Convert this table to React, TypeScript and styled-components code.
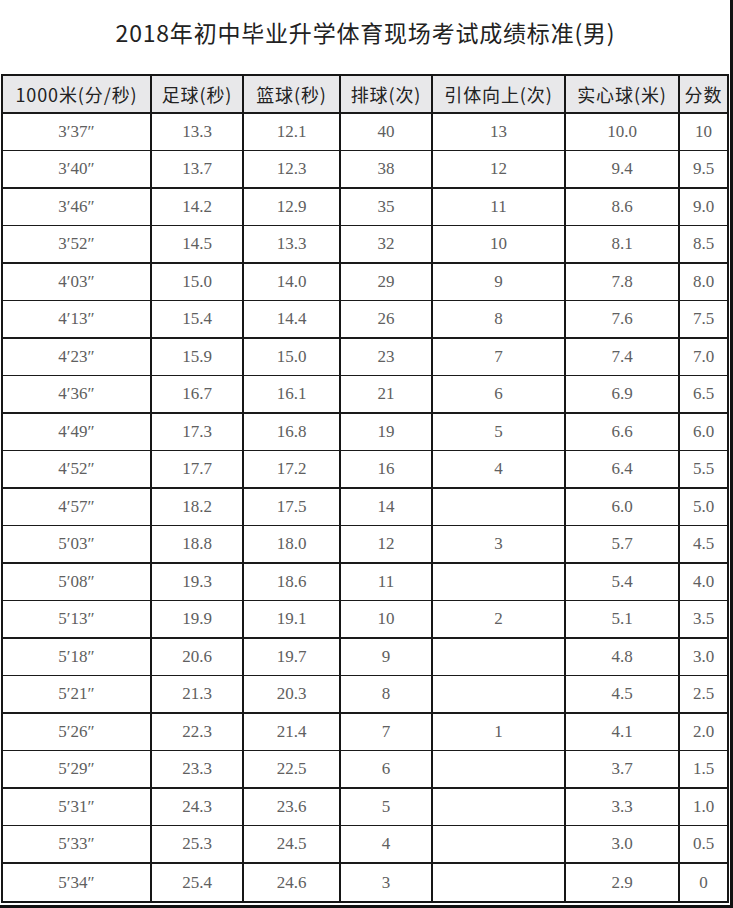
import React from "react";
import styled, { createGlobalStyle } from "styled-components";

const GlobalStyle = createGlobalStyle`
  html, body { margin: 0; padding: 0; background: #ffffff; }
  * { box-sizing: border-box; }
`;

const Page = styled.div`
  width: 733px;
  height: 908px;
  padding-left: 1px;
  border-right: 3px solid #111111;
  border-bottom: 3px solid #111111;
  display: flex;
  flex-direction: column;
  background: #ffffff;
`;

const Title = styled.h1`
  margin: 0;
  height: 74px;
  padding-bottom: 10px;
  display: flex;
  align-items: center;
  justify-content: center;
  font-family: "Noto Sans CJK SC", "Noto Sans", sans-serif;
  font-weight: 400;
  font-size: 23px;
  letter-spacing: 0.8px;
  color: #222222;
`;

const Grid = styled.div`
  width: 728px;
  height: 829px;
  display: grid;
  grid-template-columns: 149px 92px 97px 92px 133px 114px 47px;
  grid-template-rows: repeat(22, 1fr);
  border: 2px solid #161616;
`;

const BaseCell = styled.div<{ $last?: boolean; $bottom: number }>`
  display: flex;
  align-items: center;
  justify-content: center;
  border-right: ${(p) => (p.$last ? "0" : "2px solid #161616")};
  border-bottom: ${(p) => (p.$bottom ? `${p.$bottom}px solid #1a1a1a` : "0")};
  white-space: nowrap;
`;

const HeadCell = styled(BaseCell)`
  background: #e8e8ea;
  font-family: "Noto Sans CJK SC", "Noto Sans", sans-serif;
  font-size: 18px;
  color: #222222;
  letter-spacing: 0.9px;
`;

const Cell = styled(BaseCell)`
  background: #ffffff;
  font-family: "Liberation Serif", "Times New Roman", serif;
  font-size: 17px;
  color: #606060;
  padding-top: 1px;
`;

const headers = [
  "1000米(分/秒)",
  "足球(秒)",
  "篮球(秒)",
  "排球(次)",
  "引体向上(次)",
  "实心球(米)",
  "分数",
];

const run = [
  "3′37″", "3′40″", "3′46″", "3′52″", "4′03″", "4′13″", "4′23″", "4′36″", "4′49″", "4′52″", "4′57″",
  "5′03″", "5′08″", "5′13″", "5′18″", "5′21″", "5′26″", "5′29″", "5′31″", "5′33″", "5′34″",
];
const football = ["13.3","13.7","14.2","14.5","15.0","15.4","15.9","16.7","17.3","17.7","18.2","18.8","19.3","19.9","20.6","21.3","22.3","23.3","24.3","25.3","25.4"];
const basketball = ["12.1","12.3","12.9","13.3","14.0","14.4","15.0","16.1","16.8","17.2","17.5","18.0","18.6","19.1","19.7","20.3","21.4","22.5","23.6","24.5","24.6"];
const volleyball = ["40","38","35","32","29","26","23","21","19","16","14","12","11","10","9","8","7","6","5","4","3"];
const pullup = ["13","12","11","10","9","8","7","6","5","4","","3","","2","","","1","","","",""];
const ball = ["10.0","9.4","8.6","8.1","7.8","7.6","7.4","6.9","6.6","6.4","6.0","5.7","5.4","5.1","4.8","4.5","4.1","3.7","3.3","3.0","2.9"];
const score = ["10","9.5","9.0","8.5","8.0","7.5","7.0","6.5","6.0","5.5","5.0","4.5","4.0","3.5","3.0","2.5","2.0","1.5","1.0","0.5","0"];

const rows = run.map((r, i) => [r, football[i], basketball[i], volleyball[i], pullup[i], ball[i], score[i]]);

export default function App() {
  return (
    <>
      <GlobalStyle />
      <Page>
        <Title>2018年初中毕业升学体育现场考试成绩标准(男)</Title>
        <Grid>
          {headers.map((h, c) => (
            <HeadCell key={h} $last={c === headers.length - 1} $bottom={2}>
              {h}
            </HeadCell>
          ))}
          {rows.map((row, i) =>
            row.map((v, c) => (
              <Cell
                key={`${i}-${c}`}
                $last={c === row.length - 1}
                $bottom={i === rows.length - 1 ? 0 : i % 2 === 1 ? 2 : 1}
              >
                {v}
              </Cell>
            ))
          )}
        </Grid>
      </Page>
    </>
  );
}
